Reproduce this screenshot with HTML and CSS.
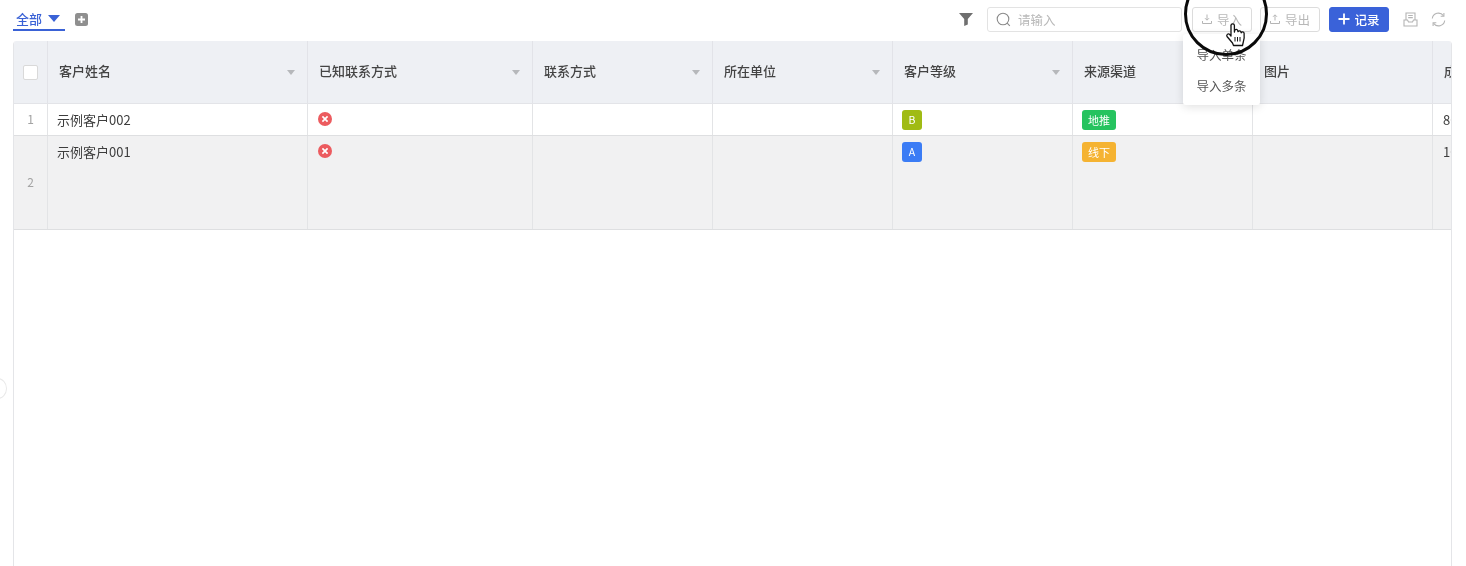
FILE: index.html
```html
<!DOCTYPE html>
<html lang="zh-CN">
<head>
<meta charset="utf-8">
<title>客户</title>
<link rel="stylesheet" href="styles.css">
</head>
<body>
<div class="page">
  <header class="toolbar">
    <div class="tabs">
      <div class="tab"><span>全部</span><i class="caret"></i></div>
      <svg class="add" width="13" height="13" viewBox="0 0 13 13"><rect width="13" height="13" rx="2.5" fill="#8f8f8f"/><path d="M6.5 3v7M3 6.5h7" stroke="#fff" stroke-width="1.8"/></svg>
    </div>
    <div class="tools">
      <svg class="filter" width="14" height="13" viewBox="0 0 14 13"><path d="M0 0h14L8.8 6v5.6L5.2 13V6z" fill="#6f6f6f"/></svg>
      <div class="search">
        <svg width="15" height="15" viewBox="0 0 15 15" fill="none" stroke="#8a8a8a" stroke-width="1.1"><circle cx="7" cy="7" r="5.8"/><path d="M11.2 11.2l2.6 2.6"/></svg>
        <span>请输入</span>
      </div>
      <button class="btn import">
        <svg width="10" height="10" viewBox="0 0 10 10" fill="none" stroke="#b5b5b5" stroke-width="1"><path d="M5 0.5v5.5M3 4.2L5 6.2l2-2M0.5 7v2.5h9V7"/></svg>
        导入
      </button>
      <button class="btn export">
        <svg width="10" height="10" viewBox="0 0 10 10" fill="none" stroke="#b5b5b5" stroke-width="1"><path d="M5 6.5V1M3 2.8L5 .8l2 2M0.5 7v2.5h9V7"/></svg>
        导出
      </button>
      <button class="btn primary">
        <svg width="12" height="12" viewBox="0 0 12 12"><path d="M6 .5v11M.5 6h11" stroke="#fff" stroke-width="1.8"/></svg>
        记录
      </button>
      <svg class="ico-tray" width="15" height="15" viewBox="0 0 15 15" fill="none" stroke="#b4b4b4" stroke-width="1.1"><path d="M3 8V1h9v7M5.2 3.5h4.6M5.2 5.6h4.6M1 8h3.5l1 2h4l1-2H14v6H1z"/></svg>
      <svg class="ico-sync" width="15" height="15" viewBox="0 0 15 15" fill="none" stroke="#b4b4b4" stroke-width="1.1"><path d="M1.3 6.5A6.2 6.2 0 0 1 12.4 3.6M13.7 8.5A6.2 6.2 0 0 1 2.6 11.4"/><path d="M12.9 1v3.2H9.7M2.1 14v-3.200h3.200"/></svg>
    </div>
  </header>

  <main class="sheet">
    <div class="row head">
      <div class="cell idx"><i class="check"></i></div>
      <div class="cell">客户姓名<i class="sort"></i></div>
      <div class="cell">已知联系方式<i class="sort"></i></div>
      <div class="cell">联系方式<i class="sort"></i></div>
      <div class="cell">所在单位<i class="sort"></i></div>
      <div class="cell">客户等级<i class="sort"></i></div>
      <div class="cell">来源渠道<i class="sort"></i></div>
      <div class="cell">图片</div>
      <div class="cell">成交金额</div>
    </div>
    <div class="row short">
      <div class="cell idx">1</div>
      <div class="cell name">示例客户002</div>
      <div class="cell"><svg class="err" width="14" height="14" viewBox="0 0 14 14"><circle cx="7" cy="7" r="7" fill="#ec5b5f"/><path d="M4.400 4.400l5.200 5.200M9.600 4.400l-5.200 5.200" stroke="#fff" stroke-width="1.700"/></svg></div>
      <div class="cell"></div>
      <div class="cell"></div>
      <div class="cell"><span class="tag grade lime">B</span></div>
      <div class="cell"><span class="tag green">地推</span></div>
      <div class="cell"></div>
      <div class="cell">800</div>
    </div>
    <div class="row tall">
      <div class="cell idx">2</div>
      <div class="cell name">示例客户001</div>
      <div class="cell"><svg class="err" width="14" height="14" viewBox="0 0 14 14"><circle cx="7" cy="7" r="7" fill="#ec5b5f"/><path d="M4.400 4.400l5.200 5.200M9.600 4.400l-5.200 5.200" stroke="#fff" stroke-width="1.700"/></svg></div>
      <div class="cell"></div>
      <div class="cell"></div>
      <div class="cell"><span class="tag grade blue">A</span></div>
      <div class="cell"><span class="tag orange">线下</span></div>
      <div class="cell"></div>
      <div class="cell">100</div>
    </div>
  </main>

  <div class="menu">
    <div class="menu-item">导入单条</div>
    <div class="menu-item">导入多条</div>
  </div>
  <div class="spot"></div>
  <svg class="hand" width="22" height="26" viewBox="0 0 22 26">
    <path d="M6 14V3.500a1.700 1.700 0 0 1 3.400 0V10l.3-1.500a1.600 1.600 0 0 1 3.100.4l.2.800a1.600 1.600 0 0 1 3 .4l.2.700a1.500 1.500 0 0 1 2.900.5c.3 3 .2 6-.8 8.700l-.8 3.500H8.500l-1-2.500L2 14.500a1.700 1.700 0 0 1 2.500-2.200z" fill="#fff" stroke="#111" stroke-width="1.300" stroke-linejoin="round"/>
    <path d="M10 15v4.500M12.500 15v4.500M15 15v4.500" stroke="#111" stroke-width="1"/>
  </svg>
  <div class="edge-handle"></div>
</div>
</body>
</html>
```
FILE: styles.css
```css
* { box-sizing: border-box; }
html, body { margin: 0; height: 100%; overflow: hidden; background: #fff; }
body { font-family: "Noto Sans CJK SC", "Inter", "Noto Sans", sans-serif; font-size: 13px; color: #3d3d3d; }
.page { position: relative; width: 1466px; height: 566px; overflow: hidden; padding: 0 14px 0 13px; display: flex; flex-direction: column; filter: blur(0.4px); }

.toolbar { height: 41px; flex: none; display: flex; justify-content: space-between; padding-bottom: 3px; }
.tabs { display: flex; align-items: center; gap: 10px; }
.tab { align-self: flex-start; width: 52px; height: 31px; padding: 9px 0 0 3px; border-bottom: 2px solid #3a62d6; color: #3a62d6; display: flex; align-items: flex-start; gap: 6px; line-height: 20px; font-weight: 500; }
.tab span { line-height: 20px; }
.caret { margin-top: 6px; width: 0; height: 0; border: 6px solid transparent; border-top: 7px solid #3a62d6; border-bottom: 0; }

.tools { display: flex; align-items: center; margin-top: 0; padding-right: 6px; }
.filter { margin-right: 14px; }
.search { width: 195px; height: 25px; border: 1px solid #e3e3e3; border-radius: 3px; display: flex; align-items: center; gap: 7px; padding-left: 8px; color: #b9b9b9; font-size: 12.500px; }
.btn { font: inherit; font-size: 12.500px; height: 25px; border-radius: 3px; border: 1px solid #dcdcdc; background: #fff; color: #b8b8b8; display: flex; align-items: center; justify-content: center; gap: 5px; padding: 0; }
.import { width: 60px; margin-left: 10px; }
.export { width: 60px; margin-left: 8px; }
.primary { width: 60px; margin-left: 9px; background: #3a62d9; border-color: #3a62d9; color: #fff; font-weight: 500; gap: 4px; }
.ico-tray { margin-left: 14px; }
.ico-sync { margin-left: 13px; }

.sheet { flex: none; height: 560px; width: 1439px; overflow: hidden; border: 1px solid #e4e5e8; border-top: 0; border-radius: 4px 4px 0 0; }
.row { display: grid; grid-template-columns: 34px 260px 225px 180px 180px 180px 180px 180px 180px; width: 1620px; border-bottom: 1px solid #dedfe1; }
.cell { border-right: 1px solid #e3e4e6; padding: 6px 10px 0 10px; line-height: 20px; position: relative; min-width: 0; white-space: nowrap; }
.idx { padding: 0 0 2px; display: flex; align-items: center; justify-content: center; color: #a3a3a3; font-size: 12px; }
.name { padding-left: 9px; }

.head { height: 63px; background: #eef0f4; font-weight: 500; color: #444; border-bottom-color: #e3e4e8; }
.head .cell { display: flex; align-items: center; padding: 0 10px 2px 11px; border-right-color: #e2e3e8; }
.head .idx { padding: 0; }
.check { width: 15px; height: 15px; background: #fff; border: 1px solid #d9d9d9; border-radius: 2px; }
.sort { position: absolute; right: 12px; top: 29px; width: 0; height: 0; border: 4.500px solid transparent; border-top: 5.500px solid #b6b8bb; border-bottom: 0; }

.short { height: 32px; }
.tall { height: 94px; background: #f1f1f2; }
.err { display: block; margin-top: 2px; }
.tag { display: block; height: 20px; line-height: 20px; border-radius: 3px; color: #fff; font-size: 11px; text-align: center; width: 34px; margin-left: -1px; }
.grade { width: 20px; font-size: 10.500px; }
.lime { background: #a0bb14; }
.blue { background: #3b7cf5; }
.green { background: #26c35f; }
.orange { background: #f5b332; }

.menu { position: absolute; left: 1183px; top: 34px; width: 77px; height: 71px; background: #fff; border-radius: 3px; box-shadow: 0 2px 10px rgba(0,0,0,.12); display: flex; flex-direction: column; align-items: center; padding-top: 11px; gap: 11px; color: #555; font-size: 12.500px; }
.menu-item { line-height: 20px; }
.spot { position: absolute; left: 1184px; top: -28px; width: 84px; height: 84px; border: 3px solid #0a0a0a; border-radius: 50%; }
.hand { position: absolute; left: 1225px; top: 22px; }
.edge-handle { position: absolute; left: -12px; top: 378px; width: 19px; height: 21px; border: 1px solid #e9e9e9; border-radius: 50%; background: #fff; }
```
